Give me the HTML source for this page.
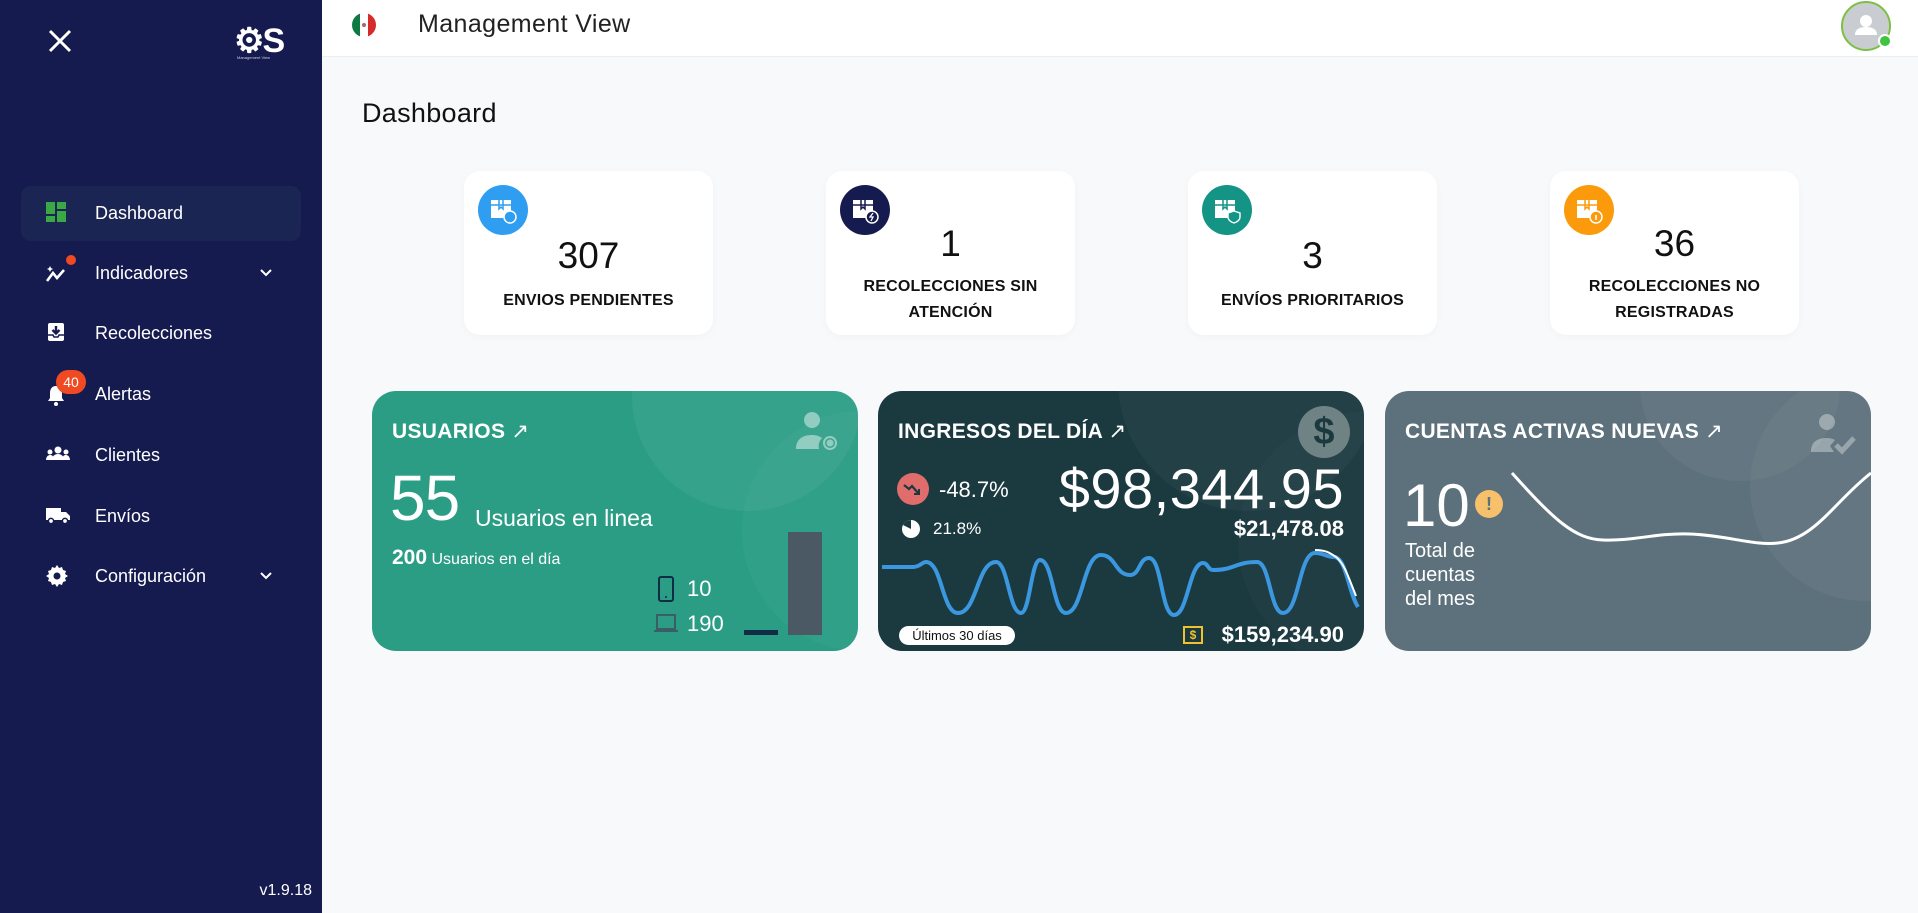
<!DOCTYPE html>
<html><head><meta charset="utf-8"><style>
*{box-sizing:border-box;margin:0;padding:0}
body{width:1918px;height:913px;overflow:hidden;background:#f8f9fb;font-family:"Liberation Sans",sans-serif;position:relative}
.abs{position:absolute}
#side{left:0;top:0;width:322px;height:913px;background:#161b4f;color:#fff}
.nav{position:absolute;left:0;width:322px;height:40px;font-size:18px;color:#fff}
.nav .t{position:absolute;left:95px;top:0;line-height:40px}
.nav svg{position:absolute;left:45px;top:8px}
.nav .chev{left:258px;top:12px}
#hdr{left:322px;top:0;width:1596px;height:57px;background:#fff;border-bottom:1px solid #eceef2}
.stat{position:absolute;top:171px;width:249px;height:164px;background:#fff;border-radius:16px;box-shadow:0 2px 8px rgba(0,0,0,.03)}
.stat .ic{position:absolute;left:14px;top:14px;width:50px;height:50px;border-radius:50%}
.stat .n{position:absolute;left:0;width:100%;text-align:center;font-size:37px;color:#111}
.stat .l{position:absolute;left:0;width:100%;text-align:center;font-size:16px;font-weight:bold;color:#111;line-height:26px;letter-spacing:.2px}
.card{position:absolute;top:391px;width:486px;height:260px;border-radius:24px;overflow:hidden;color:#fff}
.card .ttl{position:absolute;left:20px;top:28px;font-size:21px;font-weight:bold;letter-spacing:.3px}
</style></head><body>
<div id="side" class="abs">
  <svg class="abs" style="left:47px;top:28px" width="26" height="26" viewBox="0 0 26 26"><path d="M3 3L23 23M23 3L3 23" stroke="#fff" stroke-width="3"/></svg>
  <div class="abs" style="left:234px;top:21px;font-size:34px;font-weight:bold;color:#fff;letter-spacing:-2px">⚙S</div>
  <div class="abs" style="left:237px;top:55px;font-size:4px;color:#ccd">Management View</div>
  <div class="abs" style="left:21px;top:186px;width:280px;height:55px;background:#1b2553;border-radius:10px"></div>
  <div class="nav" style="top:193px"><svg width="22" height="22" viewBox="0 0 22 22"><rect x="1" y="1" width="9" height="12" fill="#3aa844"/><rect x="12" y="1" width="9" height="7" fill="#3aa844"/><rect x="1" y="15" width="9" height="6" fill="#3aa844"/><rect x="12" y="10" width="9" height="11" fill="#3aa844"/></svg><span class="t">Dashboard</span></div>
  <div class="nav" style="top:253px"><svg width="26" height="24" viewBox="0 0 26 24"><path d="M2 20L8 12L12 17L19 9" stroke="#fff" stroke-width="2.6" fill="none"/><path d="M5 5l1 2 2 1-2 1-1 2-1-2-2-1 2-1z" fill="#fff"/></svg><div class="abs" style="left:66px;top:2px;width:10px;height:10px;border-radius:50%;background:#f04a23"></div><span class="t">Indicadores</span><svg class="chev" width="16" height="16" viewBox="0 0 16 16"><path d="M3 5l5 5 5-5" stroke="#fff" stroke-width="2" fill="none"/></svg></div>
  <div class="nav" style="top:313px"><svg width="22" height="22" viewBox="0 0 22 22"><rect x="3" y="2" width="16" height="18" rx="2" fill="#fff"/><path d="M11 5v7M7.5 9l3.5 3.5L14.5 9" stroke="#161b4f" stroke-width="2.4" fill="none"/><path d="M3 14h5l1 2h4l1-2h5" stroke="#161b4f" stroke-width="1.5" fill="none"/></svg><span class="t">Recolecciones</span></div>
  <div class="nav" style="top:374px"><svg width="22" height="24" viewBox="0 0 22 24"><path d="M11 4c-4 0-6 3-6 7v5l-2 3h16l-2-3v-5c0-4-2-7-6-7z" fill="#fff"/><circle cx="11" cy="22" r="2" fill="#fff"/></svg><div class="abs" style="left:56px;top:-4px;width:30px;height:24px;border-radius:12px;background:#f04a23;font-size:14px;text-align:center;line-height:24px">40</div><span class="t">Alertas</span></div>
  <div class="nav" style="top:435px"><svg width="26" height="22" viewBox="0 0 26 22"><circle cx="13" cy="7" r="3.5" fill="#fff"/><path d="M7 17c0-4 3-6 6-6s6 2 6 6z" fill="#fff"/><circle cx="5" cy="9" r="2.5" fill="#fff"/><circle cx="21" cy="9" r="2.5" fill="#fff"/><path d="M1 17c0-3 2-5 4-5s3 1 3 2v3zM25 17c0-3-2-5-4-5s-3 1-3 2v3z" fill="#fff"/></svg><span class="t">Clientes</span></div>
  <div class="nav" style="top:496px"><svg width="26" height="22" viewBox="0 0 26 22"><path d="M1 4h15v12H1zM16 8h5l4 4v4h-9z" fill="#fff"/><circle cx="6" cy="17" r="2.6" fill="#fff" stroke="#161b4f" stroke-width="1.5"/><circle cx="20" cy="17" r="2.6" fill="#fff" stroke="#161b4f" stroke-width="1.5"/></svg><span class="t">Envíos</span></div>
  <div class="nav" style="top:556px"><svg width="24" height="24" viewBox="0 0 24 24"><path d="M12 1l2 3 3-1 1 3 3 1-1 3 3 2-3 2 1 3-3 1-1 3-3-1-2 3-2-3-3 1-1-3-3-1 1-3-3-2 3-2-1-3 3-1 1-3 3 1z" fill="#fff"/><circle cx="12" cy="12" r="3.5" fill="#161b4f"/></svg><span class="t">Configuración</span><svg class="chev" width="16" height="16" viewBox="0 0 16 16"><path d="M3 5l5 5 5-5" stroke="#fff" stroke-width="2" fill="none"/></svg></div>
  <div class="abs" style="right:10px;top:882px;font-size:16px;color:#fff">v1.9.18</div>
</div>
<div id="hdr" class="abs">
  <div class="abs" style="left:30px;top:13px;width:24px;height:24px;border-radius:50%;overflow:hidden;display:flex"><div style="flex:1;background:#0b7a43"></div><div style="flex:1;background:#fff;display:flex;align-items:center;justify-content:center"><div style="width:4px;height:4px;background:#a66;border-radius:50%"></div></div><div style="flex:1;background:#d52b2b"></div></div>
  <div class="abs" style="left:96px;top:10px;font-size:25px;color:#222;letter-spacing:.4px">Management View</div>
  <div class="abs" style="left:1519px;top:1px;width:50px;height:50px;border-radius:50%;border:2px solid #7bc043;background:#c9cdd2;overflow:hidden">
    <svg width="46" height="46" viewBox="0 0 46 46"><circle cx="23" cy="18" r="6" fill="#fff"/><path d="M12 32c0-6 5-8 11-8s11 2 11 8z" fill="#fff"/></svg>
  </div>
  <div class="abs" style="left:1556px;top:34px;width:14px;height:14px;border-radius:50%;background:#3ec43e;border:2px solid #fff"></div>
</div>
<div class="abs" style="left:362px;top:98px;font-size:27px;color:#111;letter-spacing:.3px">Dashboard</div>

<div class="stat" style="left:464px"><div class="ic" style="background:#2f9ef0"></div><svg class="abs" style="left:26px;top:26px" width="28" height="28" viewBox="0 0 28 28"><rect x="1" y="3" width="20" height="18" fill="#fff"/><path d="M1 8h20M9 3v9l2-2 2 2V3" stroke="#2f9ef0" stroke-width="1.5" fill="none"/><circle cx="20" cy="20" r="6" fill="#2f9ef0" stroke="#fff" stroke-width="1.5"/></svg><div class="n" style="top:64px">307</div><div class="l" style="top:117px">ENVIOS PENDIENTES</div></div>
<div class="stat" style="left:826px"><div class="ic" style="background:#161b4f"></div><svg class="abs" style="left:26px;top:26px" width="28" height="28" viewBox="0 0 28 28"><rect x="1" y="3" width="20" height="18" fill="#fff"/><path d="M1 8h20M9 3v9l2-2 2 2V3" stroke="#161b4f" stroke-width="1.5" fill="none"/><circle cx="20" cy="20" r="6" fill="#161b4f" stroke="#fff" stroke-width="1.5"/><path d="M21 16l-3 4h3l-2 4" stroke="#fff" stroke-width="1.3" fill="none"/></svg><div class="n" style="top:52px">1</div><div class="l" style="top:103px">RECOLECCIONES SIN<br>ATENCIÓN</div></div>
<div class="stat" style="left:1188px"><div class="ic" style="background:#139485"></div><svg class="abs" style="left:26px;top:26px" width="28" height="28" viewBox="0 0 28 28"><rect x="1" y="3" width="20" height="18" fill="#fff"/><path d="M1 8h20M9 3v9l2-2 2 2V3" stroke="#139485" stroke-width="1.5" fill="none"/><path d="M20 14l6 2v4c0 3-3 5-6 6-3-1-6-3-6-6v-4z" fill="#139485" stroke="#fff" stroke-width="1.4"/></svg><div class="n" style="top:64px">3</div><div class="l" style="top:117px">ENVÍOS PRIORITARIOS</div></div>
<div class="stat" style="left:1550px"><div class="ic" style="background:#fb9a0b"></div><svg class="abs" style="left:26px;top:26px" width="28" height="28" viewBox="0 0 28 28"><rect x="1" y="3" width="20" height="18" fill="#fff"/><path d="M1 8h20M9 3v9l2-2 2 2V3" stroke="#fb9a0b" stroke-width="1.5" fill="none"/><circle cx="20" cy="20" r="6" fill="#fb9a0b" stroke="#fff" stroke-width="1.5"/><path d="M20 18v5" stroke="#fff" stroke-width="1.6"/></svg><div class="n" style="top:52px">36</div><div class="l" style="top:103px">RECOLECCIONES NO<br>REGISTRADAS</div></div>

<!-- Usuarios -->
<div class="card" style="left:372px;background:#2b9d85">
  <div class="abs" style="left:260px;top:-110px;width:230px;height:230px;border-radius:50%;background:rgba(255,255,255,.05)"></div>
  <div class="abs" style="left:370px;top:20px;width:240px;height:240px;border-radius:50%;background:rgba(255,255,255,.03)"></div>
  <div class="ttl">USUARIOS <span style="font-weight:normal">↗</span></div>
  <svg class="abs" style="left:422px;top:18px" width="46" height="46" viewBox="0 0 46 46"><circle cx="18" cy="11" r="8" fill="rgba(255,255,255,.45)"/><path d="M2 40c0-10 7-14 16-14 4 0 7 1 10 3-3 3-4 7-3 11z" fill="rgba(255,255,255,.45)"/><circle cx="36" cy="34" r="6" fill="none" stroke="rgba(255,255,255,.45)" stroke-width="2"/><circle cx="36" cy="34" r="3.5" fill="rgba(255,255,255,.45)"/></svg>
  <div class="abs" style="left:18px;top:70px;font-size:64px;font-weight:300;letter-spacing:-1px">55</div>
  <div class="abs" style="left:103px;top:114px;font-size:23px">Usuarios en linea</div>
  <div class="abs" style="left:20px;top:155px;font-size:16px"><b style="font-size:21px">200</b> Usuarios en el día</div>
  <svg class="abs" style="left:285px;top:185px" width="18" height="26" viewBox="0 0 18 26"><rect x="2" y="1" width="14" height="24" rx="2" fill="none" stroke="#0f2d45" stroke-width="2"/><circle cx="9" cy="21" r="1" fill="#0f2d45"/></svg>
  <div class="abs" style="left:315px;top:185px;font-size:22px">10</div>
  <svg class="abs" style="left:281px;top:222px" width="26" height="22" viewBox="0 0 26 22"><rect x="4" y="2" width="18" height="14" fill="none" stroke="#3b5e66" stroke-width="2"/><path d="M1 18h24" stroke="#3b5e66" stroke-width="2"/></svg>
  <div class="abs" style="left:315px;top:220px;font-size:22px">190</div>
  <div class="abs" style="left:372px;top:239px;width:34px;height:5px;background:#0f2d45"></div>
  <div class="abs" style="left:416px;top:141px;width:34px;height:103px;background:#4a5963"></div>
</div>

<!-- Ingresos -->
<div class="card" style="left:878px;background:#1b3a40">
  <div class="abs" style="left:240px;top:-140px;width:260px;height:260px;border-radius:50%;background:rgba(255,255,255,.03)"></div>
  <div class="abs" style="left:360px;top:20px;width:260px;height:260px;border-radius:50%;background:rgba(255,255,255,.02)"></div>
  <div class="ttl">INGRESOS DEL DÍA <span style="font-weight:normal">↗</span></div>
  <div class="abs" style="left:420px;top:15px;width:52px;height:52px;border-radius:50%;background:#6f8385;text-align:center;line-height:52px;font-size:38px;font-weight:bold;color:#1b3a40">$</div>
  <div class="abs" style="left:19px;top:82px;width:32px;height:32px;border-radius:50%;background:#e06c6c"></div>
  <svg class="abs" style="left:24px;top:88px" width="22" height="20" viewBox="0 0 22 20"><path d="M2 6l5 4 3-3 6 7" stroke="#1b3a40" stroke-width="2.2" fill="none"/><path d="M17 10v5h-5" stroke="#1b3a40" stroke-width="2" fill="none"/></svg>
  <div class="abs" style="left:61px;top:86px;font-size:22px">-48.7%</div>
  <div class="abs" style="right:20px;top:65px;font-size:56px;letter-spacing:.5px">$98,344.95</div>
  <svg class="abs" style="left:22px;top:127px" width="22" height="22" viewBox="0 0 22 22"><circle cx="11" cy="11" r="9" fill="#fff"/><path d="M11 11V2A9 9 0 0 0 3 7z" fill="#1b3a40"/></svg>
  <div class="abs" style="left:55px;top:128px;font-size:17px">21.8%</div>
  <div class="abs" style="right:20px;top:125px;font-size:22px;font-weight:bold">$21,478.08</div>
  <svg class="abs" style="left:0;top:0" width="486" height="260" viewBox="0 0 486 260"><path d="M4,176 C20,176 25,176 35,176 C42,176 44,171 48,171 C64,171 64,222 80,222 C99,222 99,171 118,171 C130,171 131,222 143,222 C152,222 153,169 162,169 C175,169 175,222 188,222 C205,222 205,164 223,164 C238,164 237,184 252,184 C262,184 261,167 271,167 C284,167 283,224 296,224 C310,224 311,172 325,172 C330,172 330,179 335,179 C357,179 357,171 379,171 C392,171 392,222 405,222 C421,222 421,162 437,162 C447,162 447,166 456,166 C468,166 470,200 480,216" fill="none" stroke="#3b97e0" stroke-width="4"/><path d="M437,159 C448,159 452,162 458,166 C466,172 470,185 478,205" fill="none" stroke="#fff" stroke-width="2"/></svg>
  <div class="abs" style="left:21px;top:235px;width:116px;height:19px;border-radius:10px;background:#fff;color:#111;font-size:13px;text-align:center;line-height:19px">Últimos 30 días</div>
  <div class="abs" style="left:305px;top:235px;width:20px;height:18px;border:2px solid #f2c12e;color:#f2c12e;font-size:12px;font-weight:bold;text-align:center;line-height:14px">$</div>
  <div class="abs" style="right:20px;top:231px;font-size:22px;font-weight:bold">$159,234.90</div>
</div>

<!-- Cuentas -->
<div class="card" style="left:1385px;background:#5d717c">
  <div class="abs" style="left:255px;top:-100px;width:200px;height:190px;border-radius:50%;background:rgba(255,255,255,.04)"></div>
  <div class="abs" style="left:365px;top:-20px;width:230px;height:230px;border-radius:50%;background:rgba(255,255,255,.04)"></div>
  <div class="ttl">CUENTAS ACTIVAS NUEVAS <span style="font-weight:normal">↗</span></div>
  <svg class="abs" style="left:420px;top:20px" width="52" height="46" viewBox="0 0 52 46"><circle cx="22" cy="11" r="8" fill="rgba(255,255,255,.35)"/><path d="M6 41c0-10 6-14 16-14 3 0 6 1 8 2l-5 6 4 6z" fill="rgba(255,255,255,.35)"/><path d="M31 34l6 6 12-13" stroke="rgba(255,255,255,.35)" stroke-width="5" fill="none"/></svg>
  <div class="abs" style="left:18px;top:80px;font-size:60px;font-weight:300">10</div>
  <div class="abs" style="left:90px;top:99px;width:28px;height:28px;border-radius:50%;background:#f6c16a;color:#5d717c;font-weight:bold;text-align:center;line-height:28px;font-size:18px">!</div>
  <div class="abs" style="left:20px;top:148px;font-size:20px;line-height:24px">Total de<br>cuentas<br>del mes</div>
  <svg class="abs" style="left:0;top:0" width="486" height="260" viewBox="0 0 486 260"><path d="M127,82 C170,130 190,148 218,149 C250,150 270,142 304,143 C340,144 370,155 393,152 C430,148 450,110 486,82" fill="none" stroke="#fff" stroke-width="3"/></svg>
</div>
</body></html>
